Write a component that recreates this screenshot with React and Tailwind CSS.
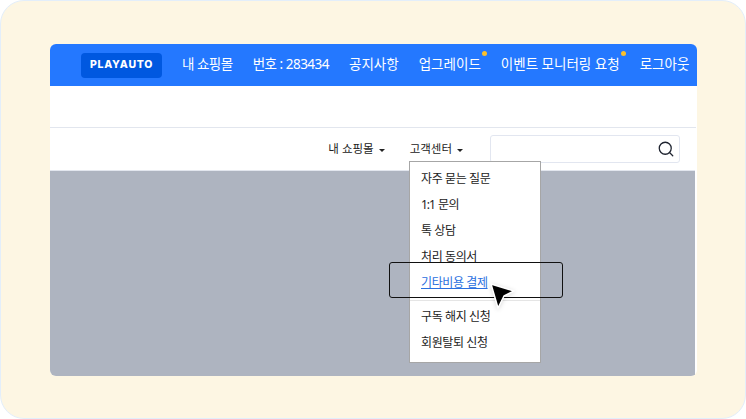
import React from 'react';
import { Search } from 'lucide-react';

const font = { fontFamily: '"Noto Sans", "Noto Sans CJK KR", sans-serif' };

const NavItem = ({ children, dot, className = '' }) => (
    <span className={`relative whitespace-nowrap text-[13.5px] leading-none text-white ${className}`}>
        {children}
        {dot && <span className="absolute -top-[7px] -right-[6px] w-[5px] h-[5px] rounded-full bg-[#fbc02d]"></span>}
    </span>
);

const Caret = () => (
    <span className="inline-block ml-[5px] align-middle w-0 h-0 border-x-[3px] border-x-transparent border-t-[3px] border-t-[#222]"></span>
);

const MenuItem = ({ children, className = '' }) => (
    <div className={`h-[26px] pl-[11px] flex items-center tracking-[-0.4px] ${className}`}>{children}</div>
);

const App = () => {
    return (
        <div className="w-[746px] h-[419px] bg-white overflow-hidden" style={font}>
            <div className="relative w-full h-full rounded-[24px] border border-[#e3eefa] bg-[#fdf6e3] pt-[43px] pl-[49px]">
                <div className="w-[647px] h-[332px] flex flex-col rounded-[6px] overflow-hidden bg-white">
                    {/* top nav */}
                    <div className="h-[42px] shrink-0 bg-[#2478ff] flex items-center pl-[31px]">
                        <div className="w-[81px] h-[25px] rounded-[4px] bg-[#0058e0] flex items-center justify-center text-white text-[10.5px] font-extrabold tracking-[0.7px] leading-none" style={{ fontFamily: '"Inter", sans-serif' }}>
                            PLAYAUTO
                        </div>
                        <div className="flex items-center gap-[20px] ml-[20px]">
                            <NavItem className="tracking-[-0.5px]">내 쇼핑몰</NavItem>
                            <NavItem className="tracking-[-0.5px]">번호 : 283434</NavItem>
                            <NavItem>공지사항</NavItem>
                            <NavItem dot>업그레이드</NavItem>
                            <NavItem dot>이벤트 모니터링 요청</NavItem>
                            <NavItem>로그아웃</NavItem>
                        </div>
                    </div>

                    <div className="h-[42px] shrink-0 mr-[1px] border-b border-[#e2e6ee]"></div>

                    {/* second row */}
                    <div className="h-[42px] shrink-0 flex items-center justify-end pr-[17px] text-[11.5px] text-[#222]">
                        <span className="whitespace-nowrap">내 쇼핑몰<Caret /></span>
                        <span className="whitespace-nowrap ml-[25px]">고객센터<Caret /></span>
                        <div className="ml-[27px] w-[190px] h-[28px] rounded-[3px] border border-[#e2e6f0] flex items-center justify-end pr-[4px]">
                            <Search className="w-[18px] h-[18px] text-[#1f2430]" strokeWidth={1.7} />
                        </div>
                    </div>

                    <div className="flex-1 mr-[2px] border-t border-[#e2e6ee] bg-[#aeb4c0]"></div>
                </div>

                {/* dropdown */}
                <div className="absolute left-[408px] top-[160px] w-[132px] h-[202px] bg-white border border-[#a6a6a6] pt-[4px] text-[12px] text-[#222]">
                    <MenuItem>자주 묻는 질문</MenuItem>
                    <MenuItem><span className="tracking-[-1px] mr-[3px]">1:1</span>문의</MenuItem>
                    <MenuItem>톡 상담</MenuItem>
                    <MenuItem>처리 동의서</MenuItem>
                    <MenuItem className="text-[#2a6fe0] underline">기타비용 결제</MenuItem>
                    <div className="h-[1px] mt-[4px] mb-[3px] bg-[#e5e5e5]"></div>
                    <MenuItem>구독 해지 신청</MenuItem>
                    <MenuItem>회원탈퇴 신청</MenuItem>
                </div>

                {/* highlight box */}
                <div className="absolute left-[388px] top-[261px] w-[174px] h-[36px] rounded-[3px] border border-[#111]"></div>

                {/* cursor */}
                <svg className="absolute left-[488px] top-[278px] drop-shadow-sm" width="28" height="32" viewBox="0 0 28 32">
                    <path d="M2 5 L25 12 L15 17 L9 29 Z" fill="#000" stroke="#fff" strokeWidth="1.5" strokeLinejoin="round" />
                </svg>
            </div>
        </div>
    );
};

export default App;
